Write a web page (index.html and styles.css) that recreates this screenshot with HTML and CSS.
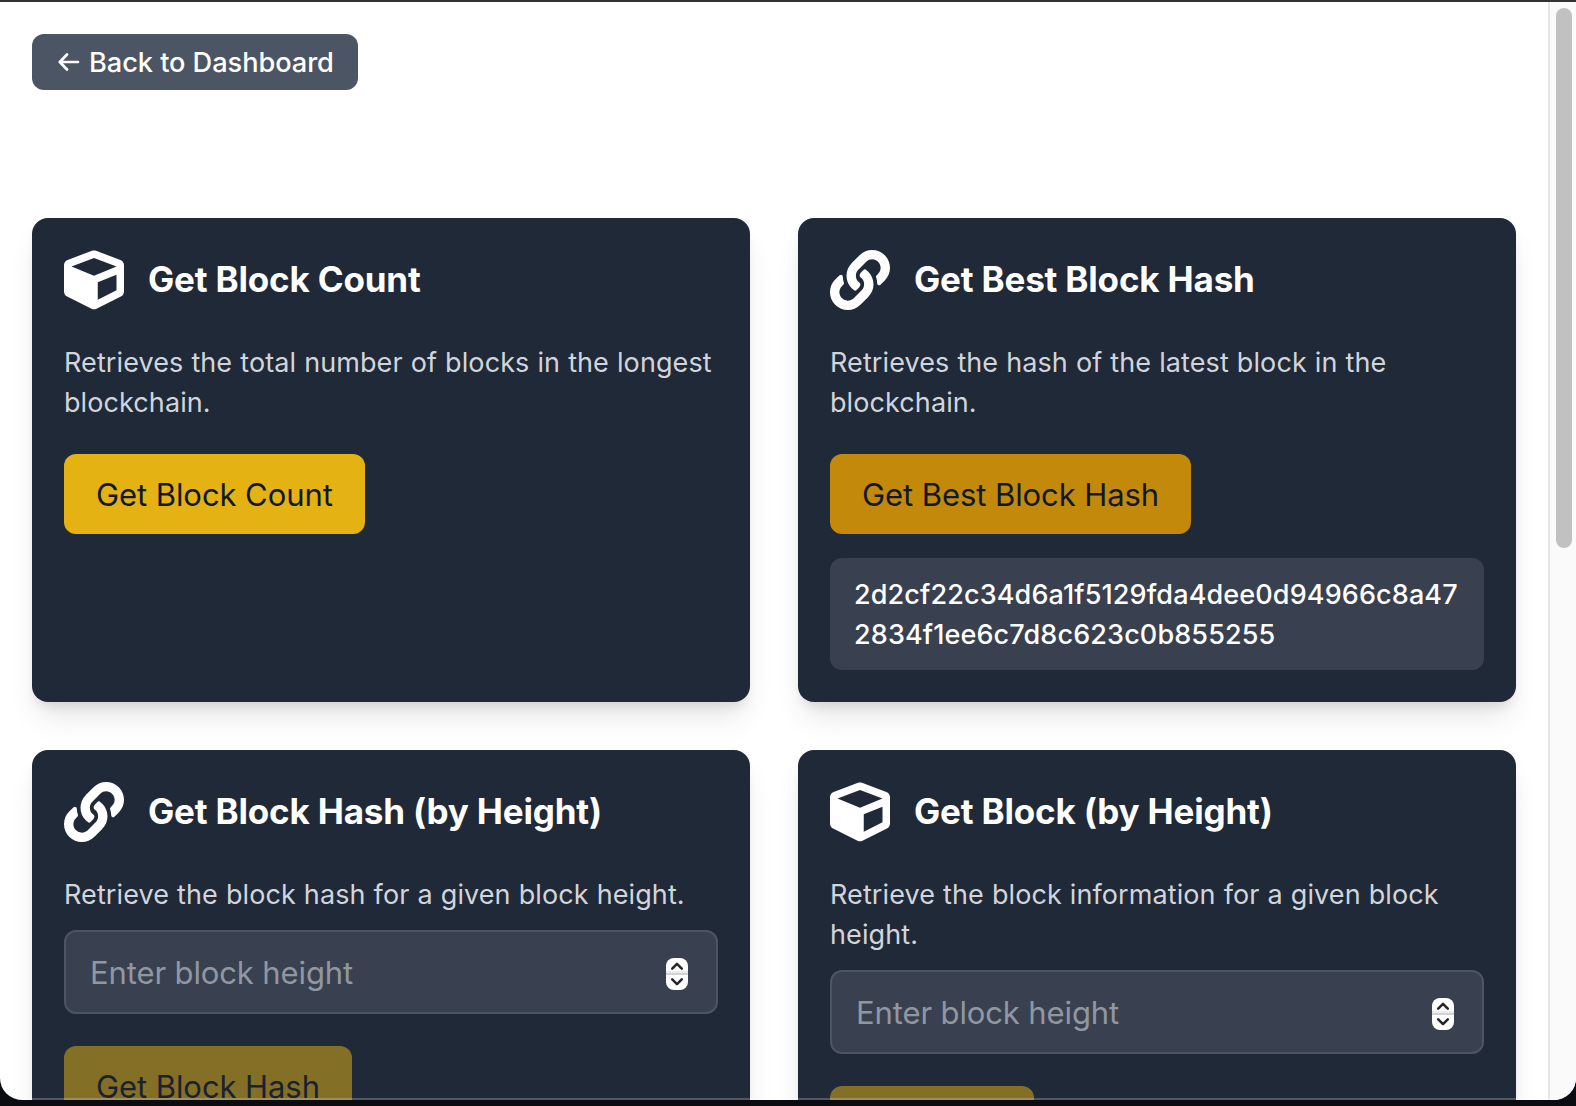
FILE: index.html
```html
<!DOCTYPE html>
<html lang="en">
<head>
<meta charset="utf-8">
<title>Blockchain</title>
<link rel="stylesheet" href="styles.css">
</head>
<body>
<svg class="defs" aria-hidden="true">
  <symbol id="cube" viewBox="0 0 512 512"><path d="M239.1 6.3l-208 78c-18.7 7-31.1 25-31.1 45v225.1c0 18.2 10.3 34.8 26.5 42.9l208 104c13.5 6.8 29.4 6.8 42.9 0l208-104c16.3-8.1 26.5-24.8 26.5-42.9V129.3c0-20-12.4-37.9-31.1-44.9l-208-78C262 2.2 250 2.2 239.1 6.3zM256 68.4l192 72v1.1l-192 78-192-78v-1.1l192-72zm32 356V275.5l160-65v133.9l-160 80z"/></symbol>
  <symbol id="link" viewBox="0 0 512 512"><path d="M326.612 185.391c59.747 59.809 58.927 155.698.36 214.59-.11.12-.24.25-.36.37l-67.2 67.2c-59.27 59.27-155.699 59.262-214.96 0-59.27-59.26-59.27-155.7 0-214.96l37.106-37.106c9.84-9.84 26.786-3.3 27.294 10.606.648 17.722 3.826 35.527 9.69 52.721 1.986 5.822.567 12.262-3.783 16.612l-13.087 13.087c-28.026 28.026-28.905 73.66-1.155 101.96 28.024 28.579 74.086 28.749 102.325.51l67.2-67.19c28.191-28.191 28.073-73.757 0-101.83-3.701-3.694-7.429-6.564-10.341-8.569a16.037 16.037 0 0 1-6.947-12.606c-.396-10.567 3.348-21.456 11.698-29.806l21.054-21.055c5.521-5.521 14.182-6.199 20.584-1.731a152.482 152.482 0 0 1 20.522 17.197zM467.547 44.449c-59.261-59.262-155.69-59.27-214.96 0l-67.2 67.2c-.12.12-.25.25-.36.37-58.566 58.892-59.387 154.781.36 214.59a152.454 152.454 0 0 0 20.521 17.196c6.402 4.468 15.064 3.789 20.584-1.731l21.054-21.055c8.35-8.35 12.094-19.239 11.698-29.806a16.037 16.037 0 0 0-6.947-12.606c-2.912-2.005-6.64-4.875-10.341-8.569-28.073-28.073-28.191-73.639 0-101.83l67.2-67.19c28.239-28.239 74.3-28.069 102.325.51 27.75 28.3 26.872 73.934-1.155 101.96l-13.087 13.087c-4.35 4.35-5.769 10.79-3.783 16.612 5.864 17.194 9.042 34.999 9.69 52.721.509 13.906 17.454 20.446 27.294 10.606l37.106-37.106c59.271-59.259 59.271-155.699.001-214.959z"/></symbol>
  <symbol id="stepper" viewBox="0 0 22 32"><rect width="22" height="32" rx="8" fill="#fff"/><path d="M0 13h22v3H0z" fill="#ececec"/><path d="M0 15h22v2H0z" fill="#d2d2d2"/><path d="M6.2 10.6 11 5.8l4.8 4.8M6.2 21.4l4.8 4.8 4.8-4.8" fill="none" stroke="#262626" stroke-width="2.5" stroke-linecap="round" stroke-linejoin="round"/></symbol>
</svg>
<div class="window">
  <main class="page">
    <a class="back"><svg class="arrow" viewBox="0 0 22 20"><path d="M20 10H2M9 2.5 1.8 10 9 17.5" fill="none" stroke="currentColor" stroke-width="2.7" stroke-linecap="round" stroke-linejoin="round"/></svg><span>Back to Dashboard</span></a>
    <div class="grid">
      <section class="card">
        <header class="head"><svg class="icon"><use href="#cube"/></svg><h2>Get Block Count</h2></header>
        <p class="desc">Retrieves the total number of blocks in the longest blockchain.</p>
        <button class="btn wide">Get Block Count</button>
      </section>
      <section class="card">
        <header class="head"><svg class="icon"><use href="#link"/></svg><h2>Get Best Block Hash</h2></header>
        <p class="desc">Retrieves the hash of the latest block in the blockchain.</p>
        <button class="btn wide pressed">Get Best Block Hash</button>
        <div class="result">2d2cf22c34d6a1f5129fda4dee0d94966c8a472834f1ee6c7d8c623c0b855255</div>
      </section>
      <section class="card">
        <header class="head"><svg class="icon"><use href="#link"/></svg><h2>Get Block Hash (by Height)</h2></header>
        <p class="desc">Retrieve the block hash for a given block height.</p>
        <div class="field"><span>Enter block height</span><svg class="stepper"><use href="#stepper"/></svg></div>
        <button class="btn off">Get Block Hash</button>
      </section>
      <section class="card">
        <header class="head"><svg class="icon"><use href="#cube"/></svg><h2>Get Block (by Height)</h2></header>
        <p class="desc">Retrieve the block information for a given block height.</p>
        <div class="field"><span>Enter block height</span><svg class="stepper"><use href="#stepper"/></svg></div>
        <button class="btn off">Get Block</button>
      </section>
    </div>
  </main>
  <aside class="scroll"><div class="thumb"></div></aside>
</div>
</body>
</html>
```
FILE: styles.css
```css
* { box-sizing: border-box; margin: 0; }
body {
  height: 1106px;
  overflow: hidden;
  background: #0b0c11;
  border-top: 2px solid #333132;
  font-family: Inter, "Liberation Sans", sans-serif;
  color: #fff;
}
.defs { display: none; }
.window {
  position: relative;
  display: flex;
  height: 1098px;
  overflow: hidden;
  background: #fff;
  border-radius: 0 0 22px 22px;
}
.window::after {
  content: "";
  position: absolute;
  left: 16px;
  right: 16px;
  bottom: 0;
  height: 2px;
  background: rgba(255, 255, 255, .22);
}
.page { flex: 1; padding: 32px; }
.back {
  display: inline-flex;
  align-items: center;
  gap: 9px;
  width: 326px;
  height: 56px;
  padding-left: 26px;
  border-radius: 12px;
  background: #4c5563;
  font-size: 27.2px;
  font-weight: 500;
  line-height: 40px;
  letter-spacing: -.06px;
  vertical-align: top;
}
.back span { padding-top: 2px; }
.arrow { width: 22px; height: 20px; }
.grid {
  display: grid;
  grid-template-columns: 1fr 1fr;
  gap: 48px;
  margin-top: 128px;
}
.card {
  display: flex;
  flex-direction: column;
  align-items: flex-start;
  padding: 32px;
  border-radius: 16px;
  background: #202937;
  box-shadow: 0 20px 30px -6px rgba(0, 0, 0, .1), 0 8px 12px -4px rgba(0, 0, 0, .1);
}
.head { display: flex; align-items: center; gap: 24px; margin-bottom: 33px; }
.icon { width: 60px; height: 60px; fill: #fff; }
h2 {
  padding-bottom: 2px;
  font-size: 35px;
  line-height: 40px;
  font-weight: 700;
  letter-spacing: -.18px;
  white-space: nowrap;
}
.desc {
  margin-bottom: -1px;
  font-size: 27px;
  line-height: 40px;
  letter-spacing: .09px;
  word-spacing: .35px;
  color: #d1d5db;
}
.btn {
  height: 80px;
  padding: 2px 32px 0;
  border: 0;
  border-radius: 12px;
  background: #e5b213;
  color: #111827;
  font: 31px/48px Inter, "Liberation Sans", sans-serif;
  letter-spacing: -.08px;
  white-space: nowrap;
}
.btn.wide { margin-top: 32px; }
.btn.pressed { background: #c3890b; }
.btn.off { margin-top: 32px; background: #846f27; color: #1a2230; }
.result {
  align-self: stretch;
  margin-top: 24px;
  padding: 17px 22px 15px 24px;
  border-radius: 12px;
  background: #394150;
  font-size: 27px;
  font-weight: 500;
  line-height: 40px;
  letter-spacing: .13px;
  word-break: break-all;
}
.field {
  display: flex;
  align-items: center;
  justify-content: space-between;
  align-self: stretch;
  height: 84px;
  margin-top: 16px;
  padding: 0 28px 0 24px;
  border: 2px solid #4c5563;
  border-radius: 12px;
  background: #394150;
  color: #9197a1;
  font-size: 31px;
  letter-spacing: -.12px;
}
.stepper { width: 22px; height: 32px; margin-top: 4px; }
.scroll {
  width: 28px;
  padding: 6px 4px 0 6px;
  border-left: 2px solid #e6e6e6;
  background: #fafafa;
}
.thumb { width: 16px; height: 540px; border-radius: 8px; background: #c1c1c1; }
```
